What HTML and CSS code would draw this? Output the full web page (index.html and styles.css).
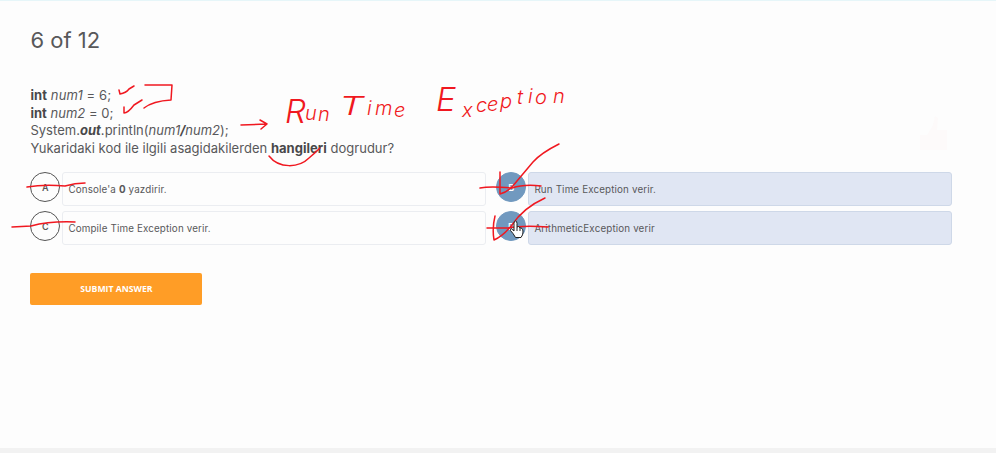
FILE: index.html
```html
<!DOCTYPE html>
<html lang="tr">
<head>
<meta charset="utf-8">
<title>Quiz</title>
<link rel="stylesheet" href="styles.css">
</head>
<body>
<main class="quiz">
  <h1 class="progress">6 of 12</h1>
  <div class="question">
    <p class="wide"><b>int</b> <i>num1</i> = 6;</p>
    <p><b>int</b> <i>num2</i> = 0;</p>
    <p>System.<b><i>out</i></b>.println(<i>num1<b>/</b>num2</i>);</p>
    <p>Yukaridaki kod ile ilgili asagidakilerden <b>hangileri</b> dogrudur?</p>
  </div>
  <div class="options">
    <div class="option"><span class="key">A</span><span class="answer">Console'a&nbsp;<b>0</b>&nbsp;yazdirir.</span></div>
    <div class="option selected"><span class="key">B</span><span class="answer">Run Time Exception verir.</span></div>
    <div class="option"><span class="key">C</span><span class="answer">Compile Time Exception verir.</span></div>
    <div class="option selected"><span class="key">D</span><span class="answer">ArithmeticException verir</span></div>
  </div>
  <button class="submit">SUBMIT ANSWER</button>
</main>
<footer class="footer"></footer>
<svg class="ink" viewBox="0 0 996 453" width="996" height="453">
  <path class="thumb" d="M920 135h7l6-10 2-9 3 2-1 12h10v20h-27z"/>
  <g class="strokes">
    <path d="M119 90L120 94Q126 93 129 89L134 86"/>
    <path d="M145 85H149L172 85L171 100Q153 101 144 108"/>
    <path d="M124 107V113Q128 113 134 105L142 100"/>
    <path d="M241 125L266 124M260 120L267 124L261 129"/>
    <path d="M269 156C279 169 299 168 309 158Q315 153 320 148"/>
    <path d="M27 187Q44 184 65 186Q75 183 85 183"/>
    <path d="M12 227L31 226Q50 221 75 222"/>
    <path d="M480 188Q490 186 512 188Q524 184 541 186"/>
    <path d="M500 172V194Q509 192 517 181L533 162Q541 153 559 144"/>
    <path d="M487 228L508 228Q523 225 548 227"/>
    <path d="M495 216Q492 228 494 240Q503 236 512 225Q523 208 545 198"/>
  </g>
  <g class="note">
    <text class="tall" x="285" y="123">R</text>
    <text class="small" x="305 318" y="120 121">un</text>
    <text class="cap" textLength="25" lengthAdjust="spacingAndGlyphs" x="339" y="115">T</text>
    <text class="small" x="367 375 394" y="115 115 117">ime</text>
    <text class="tall" x="436" y="111">E</text>
    <text class="small" x="462 476 487 500 517 528 535 553" y="117 112 111 108 104 103 104 103">xception</text>
  </g>
  <path class="hand" d="M514 223.500Q514 221 515.500 221Q517 221 517 223.500V227Q519 225.500 520 228Q521.500 226.800 522 229Q523 229 523 232Q523 235 521 237.500H515.500Q513 233 510.500 230.500Q510 229 511.500 228.800L514 231ZM517 227V231M520 228V231"/>
</svg>
</body>
</html>
```
FILE: styles.css
```css
* { box-sizing: border-box; }
body {
  margin: 0;
  height: 453px;
  display: flex;
  flex-direction: column;
  position: relative;
  overflow: hidden;
  background: #fdfdfd;
  border-top: 1px solid #e6f6f9;
  color: #58585a;
  font-family: Inter, "Liberation Sans", sans-serif;
}
.quiz { flex: 1; padding: 25px 44px 0 30.4px; }
.progress { margin: 0; font-size: 22px; line-height: 28px; font-weight: 400; }
.question { margin-top: 33.4px; font-size: 13px; line-height: 17.4px; letter-spacing: 0.025px; }
.question p { margin: 0; white-space: nowrap; }
.question .wide { letter-spacing: 0.1px; }
.question b { color: #48484a; }
.options {
  margin-top: 15px;
  display: grid;
  grid-template-columns: 456px 456px;
  column-gap: 10px;
  row-gap: 5px;
}
.option { display: flex; gap: 2px; height: 34px; font-size: 9.8px; letter-spacing: 0.15px; }
.key {
  width: 30px;
  height: 30px;
  border: 1px solid #555;
  border-radius: 50%;
  display: flex;
  align-items: center;
  justify-content: center;
  font-size: 9px;
  font-weight: 600;
}
.answer {
  flex: 1;
  display: flex;
  align-items: center;
  padding-left: 5px;
  border: 1px solid #ebedf1;
  border-radius: 3px;
}
.selected .key { background: #7199bf; border-color: #7199bf; color: #fff; }
.selected .answer { background: #e0e6f3; border-color: #ced8e8; }
.submit {
  display: block;
  width: 172px;
  height: 32px;
  margin-top: 28px;
  padding: 0 0 1px;
  border: 0;
  border-radius: 2px;
  background: #ff9d26;
  color: #fff;
  font: 700 8.7px "Open Sans", sans-serif;
}
.footer { height: 5px; background: #f2f2f2; }
.ink { position: absolute; left: 0; top: -1px; pointer-events: none; }
.strokes path {
  fill: none;
  stroke: #f01820;
  stroke-width: 1.5;
  stroke-linecap: round;
  stroke-linejoin: round;
}
.note { fill: #f01820; font-family: Inter, sans-serif; font-weight: 300; font-style: italic; }
.tall { font-size: 33px; }
.cap { font-size: 26px; }
.small { font-size: 20px; }
.thumb { fill: #fdfafa; }
.hand { fill: #fff; stroke: #222; stroke-width: 1; }
```
